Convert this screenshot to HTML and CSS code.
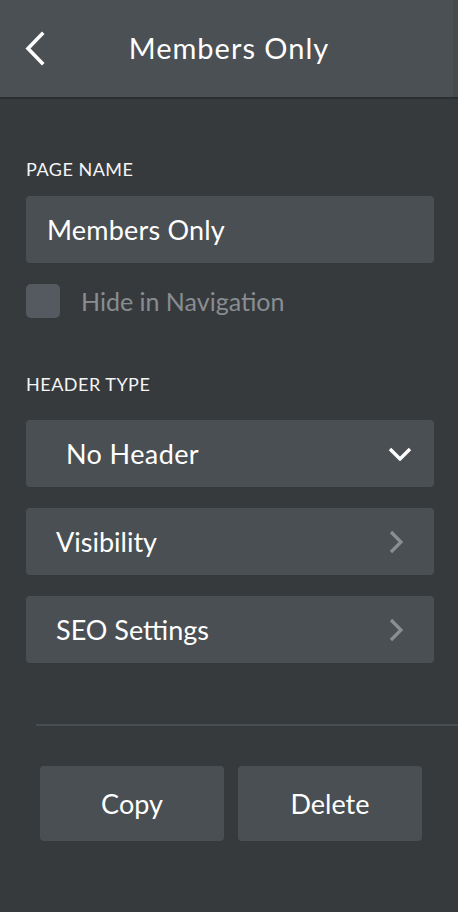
FILE: index.html
```html
<!DOCTYPE html>
<html>
<head>
<meta charset="utf-8">
<link rel="stylesheet" href="styles.css">
</head>
<body>
<div class="panel">
  <header class="topbar">
    <button class="back" aria-label="Back">
      <svg width="24" height="36" viewBox="0 0 24 36"><path d="M17 3 L3 17.5 L17 32" fill="none" stroke="#fff" stroke-width="3.6" stroke-linecap="square"/></svg>
    </button>
    <h1 class="title">Members Only</h1>
    <span></span>
  </header>
  <main class="content">
    <div class="label label-first">PAGE NAME</div>
    <div class="field">Members Only</div>
    <label class="check-row">
      <span class="checkbox"></span>
      <span class="check-text">Hide in Navigation</span>
    </label>
    <div class="label label-second">HEADER TYPE</div>
    <div class="box box-select">
      <span>No Header</span>
      <svg width="24" height="14" viewBox="0 0 24 14"><path d="M2 2 L12 12 L22 2" fill="none" stroke="#fff" stroke-width="3.4"/></svg>
    </div>
    <div class="box box-link">
      <span>Visibility</span>
      <svg width="16" height="24" viewBox="0 0 16 24"><path d="M3 2 L13 12 L3 22" fill="none" stroke="#8a8f93" stroke-width="3.2"/></svg>
    </div>
    <div class="box box-link">
      <span>SEO Settings</span>
      <svg width="16" height="24" viewBox="0 0 16 24"><path d="M3 2 L13 12 L3 22" fill="none" stroke="#8a8f93" stroke-width="3.2"/></svg>
    </div>
    <hr class="divider">
    <div class="actions">
      <button class="action">Copy</button>
      <button class="action">Delete</button>
    </div>
  </main>
</div>
</body>
</html>
```
FILE: styles.css
```css
* { box-sizing: border-box; }
html, body { margin: 0; padding: 0; }
body {
  background: #363a3d;
  font-family: "Lato", "Open Sans", sans-serif;
  color: #f7f7f7;
  width: 458px;
  height: 912px;
  overflow: hidden;
}
.panel { width: 458px; height: 912px; }
.topbar {
  height: 99px;
  background: #4b5055;
  border-bottom: 2px solid #2b2e30;
  display: grid;
  grid-template-columns: 1fr auto 1fr;
  align-items: center;
  box-shadow: inset -5px 0 0 rgba(0,0,0,0.07);
}
.back {
  justify-self: start;
  margin-left: 25px;
  background: none;
  border: 0;
  padding: 0;
  display: flex;
}
.title {
  margin: 0;
  font-size: 29px;
  font-weight: 400;
  letter-spacing: 1px;
  color: #fff;
  padding-bottom: 2px;
}
.content {
  padding: 0 24px 0 26px;
}
.label {
  font-size: 18px;
  line-height: 20px;
  font-weight: 400;
  letter-spacing: 0.5px;
  color: #f5f5f5;
}
.label-first { padding-top: 60px; }
.label-second { margin-top: 56px; }
.field {
  margin-top: 17px;
  height: 67px;
  background: #4a4f53;
  border-radius: 4px;
  display: flex;
  align-items: center;
  padding-left: 21px;
  font-size: 27px;
  letter-spacing: 0.2px;
  color: #fff;
}
.check-row {
  margin-top: 21px;
  display: flex;
  align-items: center;
  height: 34px;
}
.checkbox {
  width: 34px;
  height: 34px;
  border-radius: 5px;
  background: #545a60;
}
.check-text {
  margin-left: 21px;
  font-size: 25px;
  color: #888d91;
}
.box {
  height: 67px;
  background: #4a4f53;
  border-radius: 4px;
  display: flex;
  align-items: center;
  justify-content: space-between;
  font-size: 27px;
  color: #fff;
  margin-top: 21px;
}
.label-second + .box { margin-top: 26px; }
.box-select { padding: 0 22px 0 40px; letter-spacing: 0.4px; }
.box-link { padding: 0 30px 0 30px; }
.divider {
  border: 0;
  height: 2px;
  background: #484d51;
  margin: 61px -24px 0 10px;
}
.actions {
  margin-top: 40px;
  padding-left: 14px;
  display: flex;
  gap: 14px;
}
.action {
  width: 184px;
  height: 75px;
  background: #4a4f53;
  border: 0;
  border-radius: 4px;
  font-family: inherit;
  font-size: 27px;
  color: #fff;
}
```
